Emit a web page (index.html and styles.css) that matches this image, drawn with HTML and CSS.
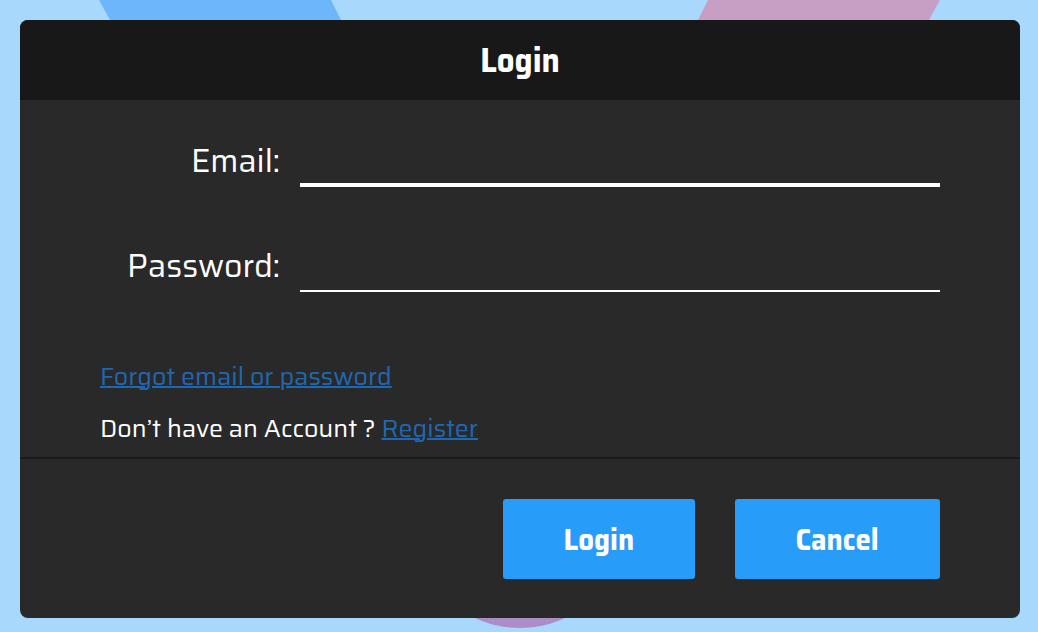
FILE: index.html
```html
<!DOCTYPE html>
<html lang="en">
<head>
<meta charset="utf-8">
<title>Login</title>
<link rel="stylesheet" href="styles.css">
</head>
<body>
<svg class="backdrop" width="1038" height="632" viewBox="0 0 1038 632" aria-hidden="true">
  <polygon points="99,0 331,0 341,20 110,20" fill="#6db6fc"/>
  <polygon points="708,0 940,0 929,20 698,20" fill="#c89fc4"/>
  <circle cx="520" cy="522" r="106" fill="#ab8ec6"/>
</svg>
<div class="modal">
  <div class="modal-header"><span class="condensed">Login</span></div>
  <div class="modal-body">
    <div class="field">
      <label class="field-label" for="email">Email:</label>
      <input class="field-input field-input--active" id="email" type="email">
    </div>
    <div class="field">
      <label class="field-label" for="password">Password:</label>
      <input class="field-input" id="password" type="password">
    </div>
    <div class="links">
      <p class="links-line"><a class="link" href="#">Forgot email or password</a></p>
      <p class="links-line">Don’t have an Account ? <a class="link" href="#">Register</a></p>
    </div>
  </div>
  <div class="modal-footer">
    <button class="btn btn--login" type="button"><span class="condensed">Login</span></button>
    <button class="btn btn--cancel" type="button"><span class="condensed">Cancel</span></button>
  </div>
</div>
</body>
</html>
```
FILE: styles.css
```css
html, body {
  margin: 0;
  padding: 0;
}
body {
  width: 1038px;
  height: 632px;
  overflow: hidden;
  background: #a8d9fd;
  position: relative;
  font-family: "Saira", "Roboto Condensed", "Liberation Sans", sans-serif;
  color: #ffffff;
  padding: 20px 18px 14px 20px;
  box-sizing: border-box;
}
.backdrop {
  position: absolute;
  left: 0;
  top: 0;
}
.modal {
  position: relative;
  width: 1000px;
  height: 598px;
  background: #292929;
  border-radius: 8px;
  overflow: hidden;
  display: flex;
  flex-direction: column;
}
.modal-header {
  height: 80px;
  flex: none;
  background: #181818;
  display: flex;
  align-items: center;
  justify-content: center;
  font-size: 35px;
  font-weight: bold;
  line-height: 40px;
  box-sizing: border-box;
}
.condensed {
  display: inline-block;
  transform: scaleX(0.885);
}
.modal-body {
  height: 359px;
  flex: none;
  box-sizing: border-box;
  padding: 39px 80px 0 0;
  border-bottom: 2px solid #1b1b1b;
  display: flex;
  flex-direction: column;
  gap: 57px;
}
.field {
  display: flex;
  align-items: flex-end;
  height: 48px;
  gap: 20px;
}
.field-label {
  width: 260px;
  flex: none;
  text-align: right;
  font-size: 32px;
  line-height: 40px;
  padding-bottom: 6px;
}
.field-input {
  flex: 1;
  height: 48px;
  box-sizing: border-box;
  background: transparent;
  border: none;
  border-bottom: 2px solid #ffffff;
  outline: none;
  color: #fff;
  font: inherit;
  font-size: 30px;
  padding: 0;
}
.field-input--active {
  border-bottom-width: 4px;
}
.links {
  margin-top: 12px;
  padding-left: 80px;
  display: flex;
  flex-direction: column;
  gap: 20px;
}
.links-line {
  margin: 0;
  font-size: 25px;
  line-height: 32px;
}
.link {
  color: #1f68b0;
  text-decoration: underline;
  text-decoration-thickness: 2px;
}
.modal-footer {
  flex: 1;
  display: flex;
  justify-content: flex-end;
  align-items: flex-start;
  gap: 40px;
  padding: 40px 80px 0 0;
}
.btn {
  height: 80px;
  border: none;
  border-radius: 3px;
  background: #279df9;
  color: #ffffff;
  font-family: inherit;
  font-size: 31px;
  font-weight: bold;
  padding: 0;
  cursor: pointer;
}
.btn--login {
  width: 192px;
}
.btn--cancel {
  width: 205px;
}
```
